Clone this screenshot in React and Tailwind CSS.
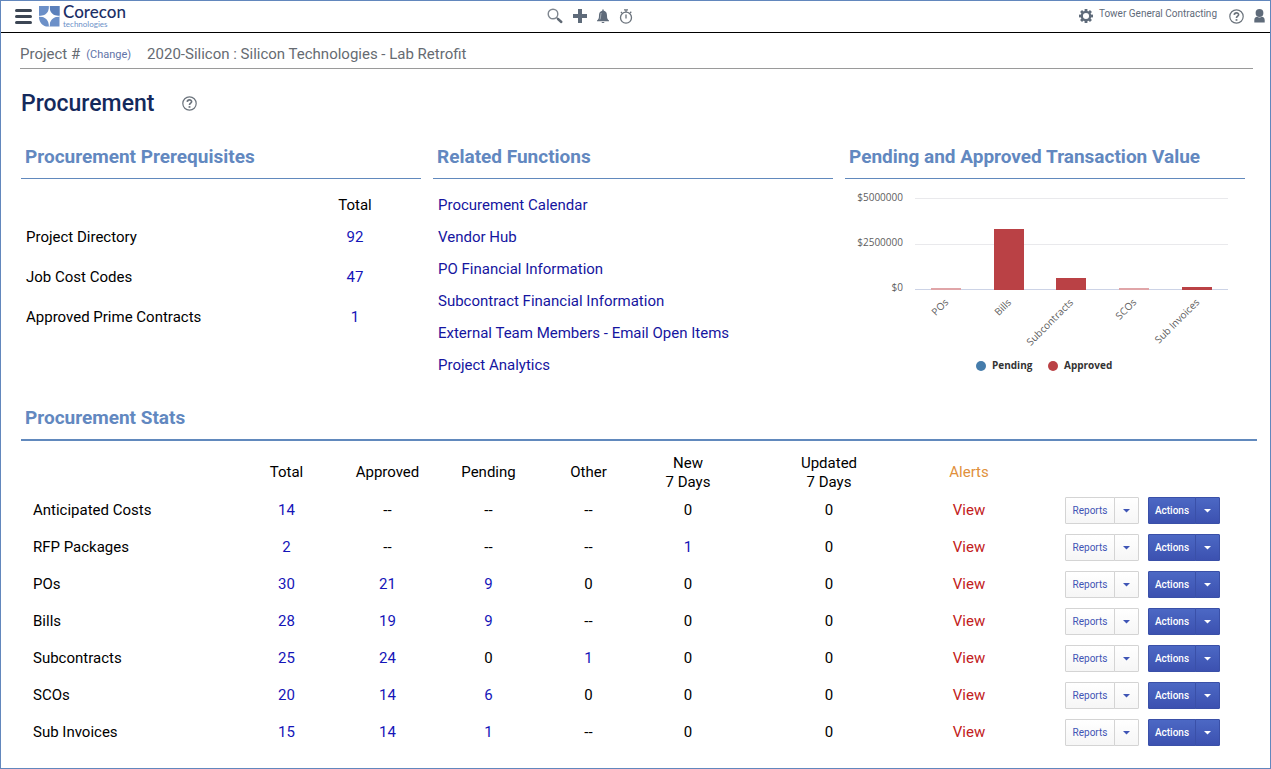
import React from "react";

const prerequisites = [
  ["Project Directory", "92"],
  ["Job Cost Codes", "47"],
  ["Approved Prime Contracts", "1"],
];

const relatedFunctions = [
  "Procurement Calendar",
  "Vendor Hub",
  "PO Financial Information",
  "Subcontract Financial Information",
  "External Team Members - Email Open Items",
  "Project Analytics",
];

const stats = [
  ["Anticipated Costs", "14", "--", "--", "--", "0", "0"],
  ["RFP Packages", "2", "--", "--", "--", "1", "0"],
  ["POs", "30", "21", "9", "0", "0", "0"],
  ["Bills", "28", "19", "9", "--", "0", "0"],
  ["Subcontracts", "25", "24", "0", "1", "0", "0"],
  ["SCOs", "20", "14", "6", "0", "0", "0"],
  ["Sub Invoices", "15", "14", "1", "--", "0", "0"],
];

const bars = [
  { label: "POs", x: 86, top: 109, fill: "#e0a5a8" },
  { label: "Bills", x: 149, top: 50, fill: "#ba4145" },
  { label: "Subcontracts", x: 211, top: 99, fill: "#ba4145" },
  { label: "SCOs", x: 274, top: 109, fill: "#e0a5a8" },
  { label: "Sub Invoices", x: 337, top: 108, fill: "#ba4145" },
];

function LogoMark() {
  return (
    <svg width="21" height="21" viewBox="0 0 21 21" aria-hidden="true">
      <path d="M0 0H20.500V20.500H7C3 19.500 0.500 16 0 12Z" fill="#6c90c8" />
      <path d="M11 0H20.500V9.500H11Z" fill="#5b80bb" />
      <path d="M10.300 0C10.800 6.500 13.500 9.600 20.500 10.200C13.500 11.200 11 14 10.300 20.500C9.500 14 7 11.200 0 10.200C7 9.600 9.800 6.500 10.300 0Z" fill="#ffffff" />
      <path d="M10.300 0V20.500M0 10.300H20.500" stroke="#ffffff" strokeWidth="0.900" />
    </svg>
  );
}

function SearchIcon() {
  return (
    <svg width="16" height="16" viewBox="0 0 16 16" fill="none" aria-hidden="true">
      <circle cx="6" cy="6" r="4.800" stroke="#7f868f" strokeWidth="1.400" />
      <path d="M9.600 9.600L11 11" stroke="#7f868f" strokeWidth="1.400" />
      <path d="M11 11L14.300 14" stroke="#5f6873" strokeWidth="2.400" strokeLinecap="round" />
    </svg>
  );
}

function PlusIcon() {
  return (
    <svg width="14" height="14" viewBox="0 0 14 14" aria-hidden="true">
      <path d="M5 0H9V5H14V9H9V14H5V9H0V5H5Z" fill="#5f6b7a" />
    </svg>
  );
}

function BellIcon() {
  return (
    <svg width="12" height="15" viewBox="0 0 12 15" fill="#5f6b7a" aria-hidden="true">
      <path d="M5.300 0.500H6.700V1.700C9.400 2.100 10 4.500 10 6.500C10 9.500 10.600 10.300 12 11.500V12.300H0V11.500C1.400 10.300 2 9.500 2 6.500C2 4.500 2.600 2.100 5.300 1.700Z" />
      <path d="M4.500 13H7.500C7.300 14.400 4.700 14.400 4.500 13Z" />
      <path d="M4.200 4C3.500 5.500 3.800 8.500 3 10.500" stroke="#c3c8ce" strokeWidth="0.700" fill="none" />
    </svg>
  );
}

function TimerIcon() {
  return (
    <svg width="14" height="15" viewBox="0 0 14 15" fill="none" stroke="#6b737c" aria-hidden="true">
      <circle cx="7" cy="8.700" r="5.500" strokeWidth="1.300" />
      <path d="M5 0.800H9M7 0.800V3M7 5.500V9.500M11 4L12.300 2.800M3 4L1.900 3" strokeWidth="1.300" />
    </svg>
  );
}

function GearIcon() {
  return (
    <svg width="14" height="14" viewBox="0 0 14 14" aria-hidden="true">
      <circle cx="7" cy="7" r="4.200" fill="none" stroke="#5f6b7a" strokeWidth="2.300" />
      {[0, 45, 90, 135, 180, 225, 270, 315].map((a) => (
        <rect key={a} x="5.600" y="0" width="2.800" height="2.800" fill="#5f6b7a" transform={`rotate(${a} 7 7)`} />
      ))}
    </svg>
  );
}

function HelpIcon() {
  return (
    <svg width="15" height="15" viewBox="0 0 15 15" fill="none" stroke="#6b737c" aria-hidden="true">
      <circle cx="7.500" cy="7.500" r="6.700" strokeWidth="1.200" />
      <path d="M5.300 5.900C5.400 3.200 9.700 3.300 9.600 5.700C9.500 7.200 7.500 7.200 7.500 9" strokeWidth="1.700" />
      <path d="M7.500 10.100V11.800" strokeWidth="1.800" />
    </svg>
  );
}

function UserIcon() {
  return (
    <svg width="11" height="14" viewBox="0 0 11 14" fill="#5f6b7a" aria-hidden="true">
      <circle cx="5.500" cy="4" r="3.900" />
      <path d="M0.300 13.500V11C0.300 8.500 2 7.700 3 7.700C4.500 8.700 6.500 8.700 8 7.700C9 7.700 10.700 8.500 10.700 11V13.500Z" />
    </svg>
  );
}

function Caret() {
  return (
    <svg width="7" height="4" viewBox="0 0 7 4" aria-hidden="true">
      <path d="M0 0H7L3.500 3.500Z" fill="currentColor" />
    </svg>
  );
}

function SplitButton({ label, primary }) {
  const tone = primary
    ? "border-[#3a50a8] bg-linear-to-b from-[#4c68c4] to-[#3c51b0] text-white font-medium"
    : "border-[#d4d4d4] bg-linear-to-b from-white to-[#f6f6f6] text-[#3f55b5]";
  return (
    <div className="flex h-[27px] text-[10px]">
      <button type="button" className={`border rounded-l-[1px] ${primary ? "w-12" : "w-[50px]"} ${tone}`}>
        {label}
      </button>
      <button
        type="button"
        aria-label={`${label} menu`}
        className={`-ml-px flex w-[25px] items-center justify-center border rounded-r-[1px] ${tone}`}
      >
        <Caret />
      </button>
    </div>
  );
}

function PanelHeading({ children }) {
  return (
    <h2 className="border-b border-[#6189bd] px-1 pb-2 text-[19px] leading-[26px] font-bold text-[#6288c0]">
      {children}
    </h2>
  );
}

function TransactionChart() {
  return (
    <svg className="w-full font-['Open_Sans',sans-serif]" viewBox="0 0 400 200" role="img" aria-label="Pending and approved transaction value">
      <g stroke="#e9e9ec">
        <path d="M70 19.500H383M70 65.500H383" />
        <path d="M70 110.500H383" stroke="#ccd3e6" />
      </g>
      <g fontSize="10" fill="#606060" textAnchor="end">
        <text x="58" y="22">$5000000</text>
        <text x="58" y="67">$2500000</text>
        <text x="58" y="112">$0</text>
      </g>
      {bars.map((b) => (
        <g key={b.label}>
          <rect x={b.x} y={b.top} width="30" height={111 - b.top} fill={b.fill} />
          <text fontSize="10" fill="#606060" textAnchor="end" transform={`translate(${b.x + 18} 124) rotate(-45)`}>
            {b.label}
          </text>
        </g>
      ))}
      <circle cx="136" cy="187" r="5" fill="#457cab" />
      <circle cx="208" cy="187" r="5" fill="#ba4145" />
      <g fontSize="10" fontWeight="700" fill="#333333">
        <text x="147" y="190">Pending</text>
        <text x="219" y="190">Approved</text>
      </g>
    </svg>
  );
}

function Count({ value }) {
  const linked = value !== "0" && value !== "--";
  return linked ? (
    <a href="#" className="text-[#1515b8]">{value}</a>
  ) : (
    value
  );
}

export default function App() {
  return (
    <div className="min-h-screen border border-[#6287bd] bg-white pb-4 font-[Roboto,sans-serif] text-[15px] text-black">
      <header className="flex h-8 items-center justify-between border-b border-black pr-[5px] pb-px pl-3.5">
        <div className="flex flex-53 items-center gap-[7px]">
          <button type="button" aria-label="Menu" className="flex w-[17px] flex-col gap-[3px]">
            <span className="h-[3px] rounded-full bg-[#3c4654]" />
            <span className="h-[3px] rounded-full bg-[#3c4654]" />
            <span className="h-[3px] rounded-full bg-[#3c4654]" />
          </button>
          <a href="#" className="flex items-center gap-[3px] font-[Lato,sans-serif]">
            <LogoMark />
            <span className="flex flex-col">
              <span className="text-[17px] leading-4 font-medium text-[#1c2f66]">Corecon</span>
              <span className="text-[8px] leading-[9px] text-[#6c90c8]">technologies</span>
            </span>
          </a>
        </div>
        <div className="flex items-center gap-2.5">
          <button type="button" aria-label="Search"><SearchIcon /></button>
          <button type="button" aria-label="Add"><PlusIcon /></button>
          <button type="button" aria-label="Notifications"><BellIcon /></button>
          <button type="button" aria-label="Timer"><TimerIcon /></button>
        </div>
        <div className="flex flex-63 items-center justify-end text-[#5f6b7a]">
          <button type="button" aria-label="Settings"><GearIcon /></button>
          <span className="mr-3 ml-1.5 pb-1.5 text-[10px]">Tower General Contracting</span>
          <button type="button" aria-label="Help" className="mr-2.5"><HelpIcon /></button>
          <button type="button" aria-label="Account"><UserIcon /></button>
        </div>
      </header>

      <div className="mr-[17px] ml-[19px] flex h-9 items-center border-b border-[#9a9a9a] pt-2 text-[#666b72]">
        <span>Project #</span>
        <a href="#" className="mr-4 ml-1.5 pt-0.5 text-[11px] text-[#5f74a8]">(Change)</a>
        <span>2020-Silicon : Silicon Technologies - Lab Retrofit</span>
      </div>

      <main className="pr-[13px] pl-5">
        <div className="mt-5 flex items-center gap-7">
          <h1 className="pt-0.5 text-[23px] leading-[26px] font-medium text-[#14295c]">Procurement</h1>
          <button type="button" aria-label="About procurement"><HelpIcon /></button>
        </div>

        <div className="mt-[27px] mr-3 grid grid-cols-3 gap-3">
          <section>
            <PanelHeading>Procurement Prerequisites</PanelHeading>
            <table className="mt-3.5 w-full table-fixed">
              <thead>
                <tr className="h-6">
                  <th aria-label="Item" />
                  <th className="w-[132px] font-normal">Total</th>
                </tr>
              </thead>
              <tbody>
                {prerequisites.map(([name, total]) => (
                  <tr key={name} className="h-10">
                    <td className="pl-[5px]">{name}</td>
                    <td className="text-center"><Count value={total} /></td>
                  </tr>
                ))}
              </tbody>
            </table>
          </section>

          <section>
            <PanelHeading>Related Functions</PanelHeading>
            <ul className="mt-2.5 pl-[5px] leading-8">
              {relatedFunctions.map((name) => (
                <li key={name}><a href="#" className="text-[#1515a0]">{name}</a></li>
              ))}
            </ul>
          </section>

          <section>
            <PanelHeading>Pending and Approved Transaction Value</PanelHeading>
            <TransactionChart />
          </section>
        </div>

        <section className="mt-6">
          <h2 className="border-b-2 border-[#6189bd] px-1 pb-2 text-[19px] leading-[26px] font-bold text-[#6288c0]">
            Procurement Stats
          </h2>
          <table className="mt-3 w-full table-fixed">
            <thead>
              <tr className="h-[39px] leading-[19px]">
                <th className="w-[215px]" aria-label="Item" />
                <th className="w-[101px] font-normal">Total</th>
                <th className="w-[101px] font-normal">Approved</th>
                <th className="w-[101px] font-normal">Pending</th>
                <th className="w-[99px] font-normal">Other</th>
                <th className="w-[100px] font-normal">New<br />7 Days</th>
                <th className="w-[182px] font-normal">Updated<br />7 Days</th>
                <th className="w-[98px] font-normal text-[#e0903c]">Alerts</th>
                <th className="w-[239px]" aria-label="Commands" />
              </tr>
            </thead>
            <tbody>
              {stats.map(([name, ...values]) => (
                <tr key={name} className="h-[37px] text-center">
                  <td className="pl-3 text-left">{name}</td>
                  {values.map((v, i) => (
                    <td key={i}><Count value={v} /></td>
                  ))}
                  <td><a href="#" className="text-[#c22020]">View</a></td>
                  <td>
                    <div className="flex justify-end gap-[9px] pr-[37px]">
                      <SplitButton label="Reports" />
                      <SplitButton label="Actions" primary />
                    </div>
                  </td>
                </tr>
              ))}
            </tbody>
          </table>
        </section>
      </main>
    </div>
  );
}
